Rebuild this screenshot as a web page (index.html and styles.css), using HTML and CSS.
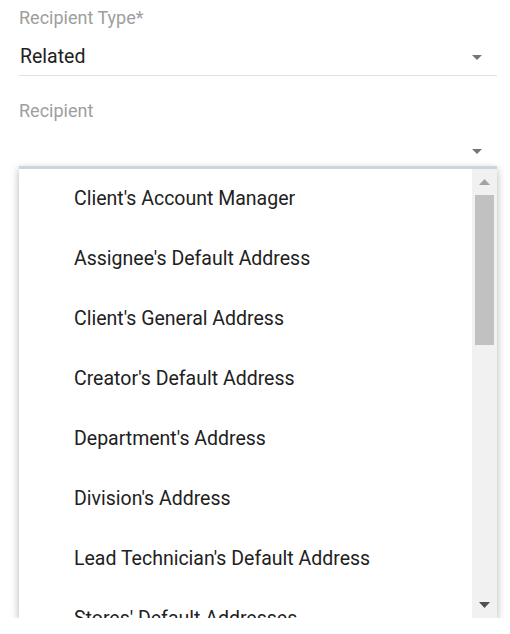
FILE: index.html
```html
<!DOCTYPE html>
<html>
<head>
<meta charset="utf-8">
<link rel="stylesheet" href="styles.css">
</head>
<body>
<div class="form">
  <div class="field">
    <div class="label">Recipient Type*</div>
    <div class="select">
      <span class="value">Related</span>
      <svg class="caret" width="10" height="5" viewBox="0 0 10 5"><path d="M0 0H10L5 5Z" fill="#757575"/></svg>
    </div>
  </div>
  <div class="field field-open">
    <div class="label">Recipient</div>
    <div class="select">
      <span class="value"></span>
      <svg class="caret" width="10" height="5" viewBox="0 0 10 5"><path d="M0 0H10L5 5Z" fill="#757575"/></svg>
    </div>
  </div>
  <div class="menu">
    <ul class="options">
      <li>Client's Account Manager</li>
      <li>Assignee's Default Address</li>
      <li>Client's General Address</li>
      <li>Creator's Default Address</li>
      <li>Department's Address</li>
      <li>Division's Address</li>
      <li>Lead Technician's Default Address</li>
      <li>Stores' Default Addresses</li>
    </ul>
    <div class="scrollbar">
      <div class="sb-btn"><svg width="11" height="6" viewBox="0 0 11 6"><path d="M0 6H11L5.5 0Z" fill="#a3a3a3"/></svg></div>
      <div class="sb-track"><div class="sb-thumb"></div></div>
      <div class="sb-btn"><svg width="11" height="6" viewBox="0 0 11 6"><path d="M0 0H11L5.5 6Z" fill="#505050"/></svg></div>
    </div>
  </div>
</div>
</body>
</html>
```
FILE: styles.css
```css
html, body {
  margin: 0;
  padding: 0;
  background: #ffffff;
}
body {
  font-family: Roboto, "Liberation Sans", sans-serif;
}
.form {
  width: 478px;
  margin-left: 19px;
  padding-top: 8px;
}
.field + .field {
  margin-top: 25px;
}
.label {
  font-size: 18px;
  line-height: 20px;
  color: #9e9e9e;
}
.select {
  display: flex;
  align-items: center;
  justify-content: space-between;
  padding: 17px 15px 6px 1px;
  border-bottom: 1px solid #e0e0e0;
}
.field-open .select {
  padding-top: 18px;
  padding-bottom: 3px;
  border-bottom: none;
}
.value {
  font-size: 19.5px;
  line-height: 24px;
  height: 24px;
  color: #212121;
}
.caret {
  display: block;
}
.menu {
  width: 478px;
  height: 452px;
  box-sizing: border-box;
  border-top: 3px solid #ccd5dc;
  background: #ffffff;
  box-shadow: 0 3px 8px rgba(0, 0, 0, 0.3);
  display: flex;
  overflow: hidden;
}
.options {
  flex: 1;
  margin: 0;
  padding: 0;
  list-style: none;
  overflow: hidden;
}
.options li {
  height: 60px;
  line-height: 60px;
  padding-left: 55px;
  font-size: 19.5px;
  color: #212121;
  white-space: nowrap;
}
.scrollbar {
  width: 25px;
  background: #f1f1f1;
  display: flex;
  flex-direction: column;
}
.sb-btn {
  height: 26px;
  flex: none;
  display: flex;
  align-items: center;
  justify-content: center;
}
.sb-btn svg {
  display: block;
}
.sb-track {
  flex: 1;
}
.sb-thumb {
  margin: 0 3px;
  height: 150px;
  background: #c1c1c1;
}
```
